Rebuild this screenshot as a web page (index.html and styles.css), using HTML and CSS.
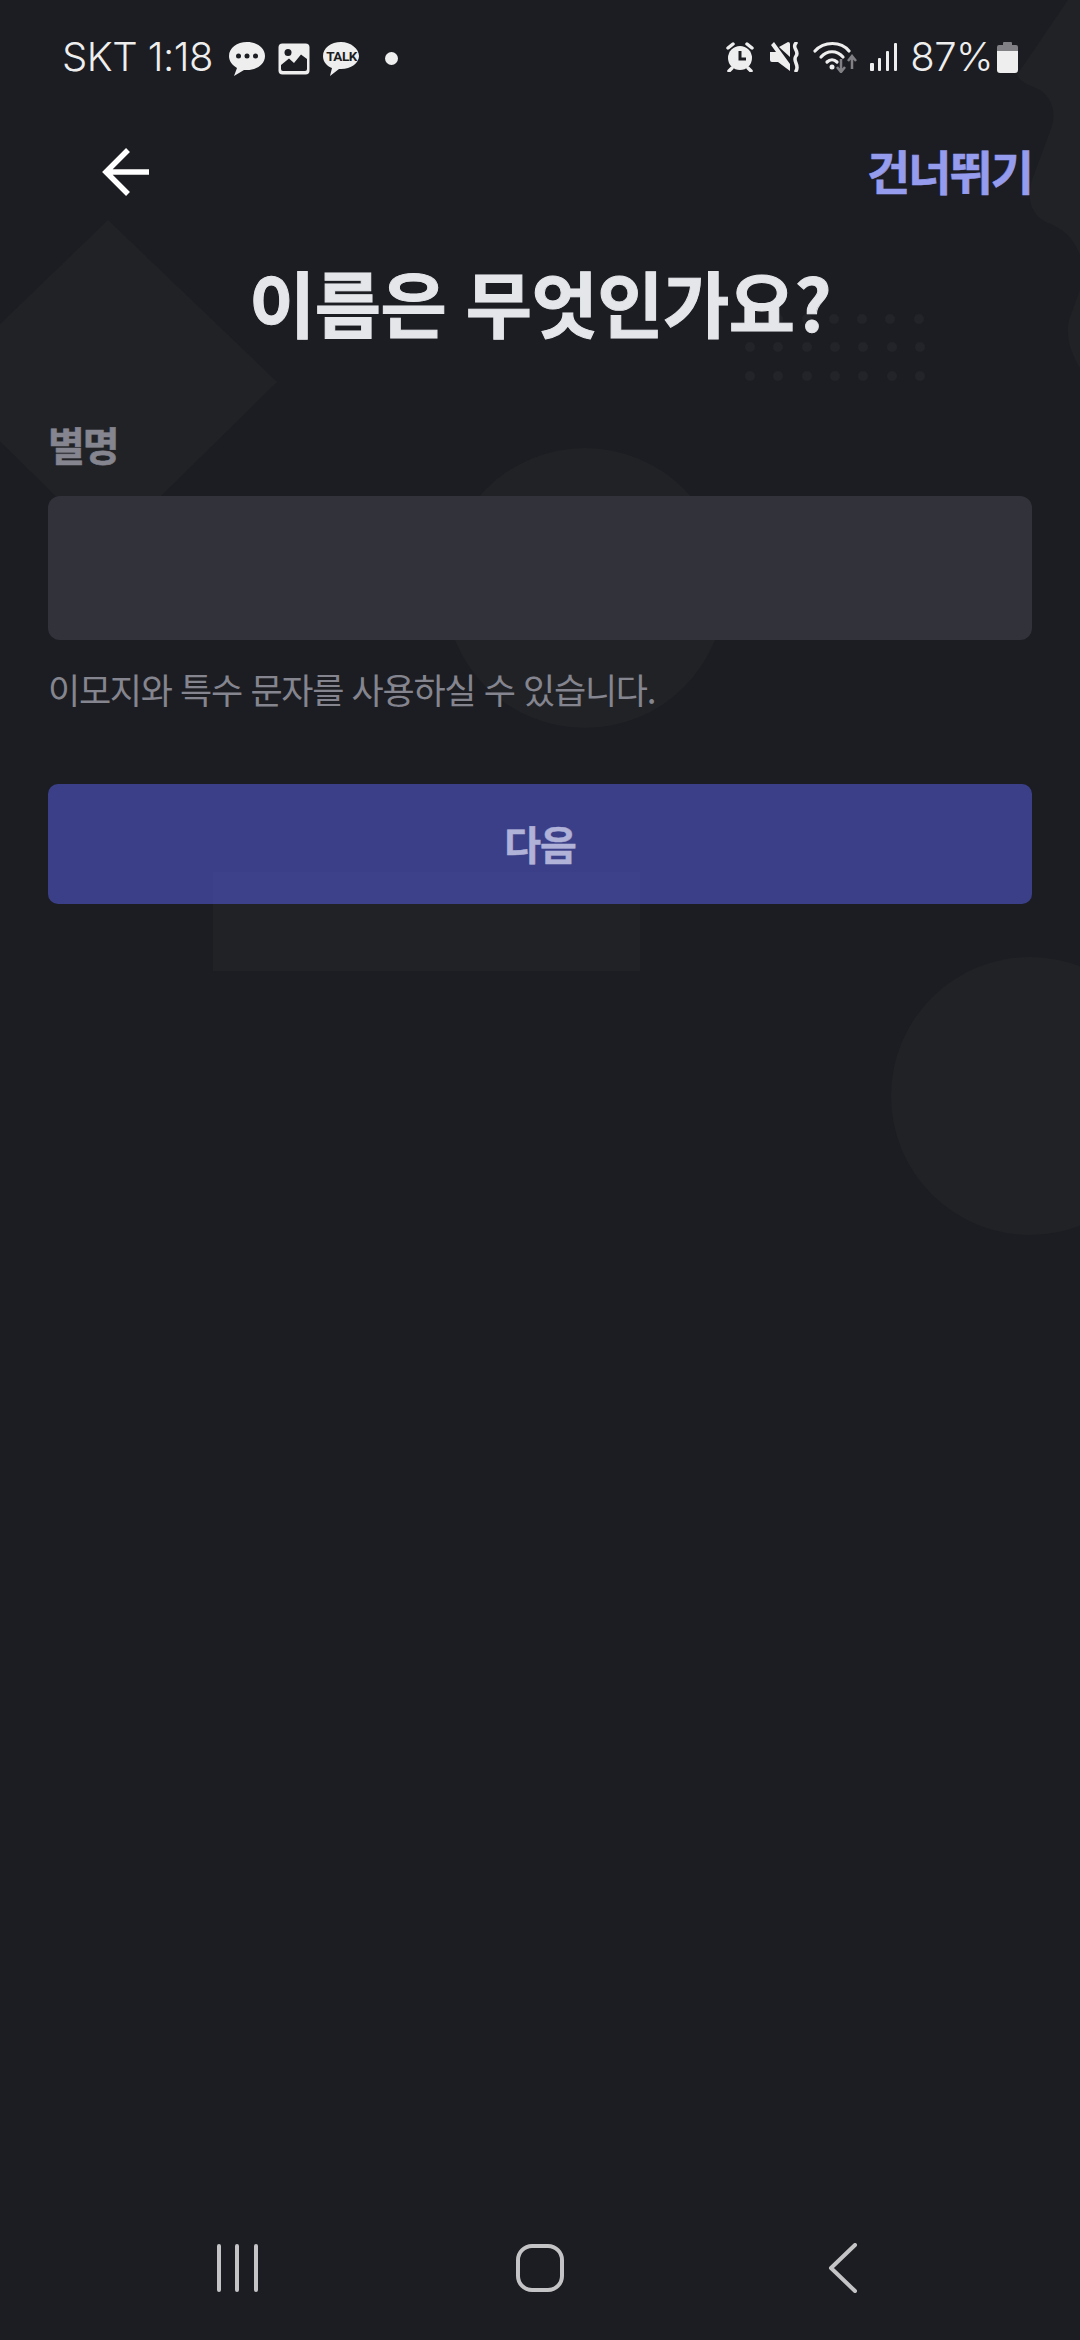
FILE: index.html
```html
<!DOCTYPE html>
<html lang="ko">
<head>
<meta charset="utf-8">
<title>이름은 무엇인가요?</title>
<link rel="stylesheet" href="styles.css">
</head>
<body>
<div class="screen">
  <svg class="decor" width="1080" height="2340" viewBox="0 0 1080 2340">
    <path d="M108 220 L277 382 L108 548 L-60 382 Z"/>
    <circle cx="585" cy="588" r="140"/>
    <rect x="213" y="872" width="427" height="99"/>
    <circle cx="1030" cy="1096" r="139"/>
    <path d="M1068 0 L1017 75 C1022 84 1032 86 1040 90 C1052 98 1056 112 1052 126 L1032 180 C1026 200 1032 216 1048 223 C1062 228 1074 238 1080 255 L1090 255 L1090 0 Z"/>
    <path d="M1080 290 L1069 320 C1065 338 1072 355 1080 368 Z"/>
    <g class="dots">
      <circle cx="750" cy="319" r="5"/><circle cx="778" cy="319" r="5"/><circle cx="807" cy="319" r="5"/><circle cx="834" cy="319" r="5"/><circle cx="862" cy="319" r="5"/><circle cx="890" cy="319" r="5"/><circle cx="919" cy="319" r="5"/>
      <circle cx="750" cy="347" r="5"/><circle cx="778" cy="347" r="5"/><circle cx="807" cy="347" r="5"/><circle cx="835" cy="347" r="5"/><circle cx="863" cy="347" r="5"/><circle cx="892" cy="347" r="5"/><circle cx="920" cy="347" r="5"/>
      <circle cx="750" cy="376" r="5"/><circle cx="778" cy="376" r="5"/><circle cx="807" cy="376" r="5"/><circle cx="835" cy="376" r="5"/><circle cx="863" cy="376" r="5"/><circle cx="892" cy="376" r="5"/><circle cx="920" cy="376" r="5"/>
    </g>
  </svg>

  <div class="status">
    <div class="status-left">
      <span class="status-text">SKT 1:18</span>
      <svg class="ic-chat" width="38" height="36" viewBox="0 0 38 36">
        <path class="fill" d="M19 1C9 1 1 7 1 15c0 5 3 9 8 12l-3 8 10-6h3c10 0 18-6 18-14S29 1 19 1Z"/>
        <circle class="cut" cx="10.500" cy="15" r="2.500"/><circle class="cut" cx="19" cy="15" r="2.500"/><circle class="cut" cx="27.500" cy="15" r="2.500"/>
      </svg>
      <svg class="ic-image" width="32" height="32" viewBox="0 0 32 32">
        <rect class="fill" x="0.500" y="0.500" width="31" height="31" rx="4"/>
        <circle class="cut" cx="10" cy="9.500" r="3.500"/>
        <path class="cut" d="M3 26 L3 22 L11 15.500 L16 20 L23 11.500 L29 16 L29 26 Q29 28 27 28 L5 28 Q3 28 3 26 Z"/>
      </svg>
      <svg class="ic-talk" width="38" height="36" viewBox="0 0 38 36">
        <path class="fill" d="M19 1C9 1 1 7 1 15c0 6 4 10 9 12l-2 8 9-7h2c10 0 18-6 18-13S29 1 19 1Z"/>
        <text class="talk-text" x="19.500" y="20">TALK</text>
      </svg>
      <span class="status-dot"></span>
    </div>
    <div class="status-right">
      <svg class="ic-alarm" width="30" height="30" viewBox="0 0 30 30">
        <circle class="fill" cx="15" cy="16" r="12"/>
        <path class="fill-line" d="M3 6 L8 2 M27 6 L22 2 M7 26 L4 29 M23 26 L26 29"/>
        <path class="cut-line" d="M15 9 V17 H21"/>
      </svg>
      <svg class="ic-mute" width="30" height="30" viewBox="0 0 30 30">
        <path class="fill" d="M0 10 H6 L1 3 L4 0 L20 22 V29 L8 20 H2 Q0 20 0 18 Z"/>
        <path class="fill" d="M9 5 L18 0 Q20 0 20 2 V15 Z"/>
        <path class="wave" d="M26 1 C21 6 30 9 26 14 C22 19 30 23 26 29"/>
      </svg>
      <svg class="ic-wifi" width="44" height="32" viewBox="0 0 44 32">
        <path class="wifi-line" d="M2 10 C11 0 28 0 36 10"/>
        <path class="wifi-line" d="M8 16 C14 9 24 9 30 16"/>
        <path class="wifi-line" d="M14 21 C17 18 21 18 24 21"/>
        <circle class="fill" cx="19" cy="26" r="2.500"/>
        <path class="arrow-line" d="M28 18 V31 M24 26 L28 31 L32 26"/>
        <path class="arrow-line" d="M39 28 V15 M35 20 L39 15 L43 20"/>
      </svg>
      <svg class="ic-signal" width="27" height="28" viewBox="0 0 27 28">
        <rect class="fill" x="0" y="20" width="4" height="8" rx="1"/>
        <rect class="fill" x="8" y="15" width="3" height="13" rx="1"/>
        <rect class="fill" x="16" y="8" width="3" height="20" rx="1"/>
        <rect class="fill" x="24" y="0" width="3" height="28" rx="1"/>
      </svg>
      <span class="status-text status-batt">87%</span>
      <svg class="ic-batt" width="21" height="31" viewBox="0 0 21 31">
        <path class="batt-top" d="M7 0 H14 Q15 0 15 1 V3 H19 Q21 3 21 5 V9 H0 V5 Q0 3 2 3 H6 V1 Q6 0 7 0 Z"/>
        <path class="fill" d="M0 9 H21 V28 Q21 31 18 31 H3 Q0 31 0 28 Z"/>
      </svg>
    </div>
  </div>

  <header class="topbar">
    <svg class="ic-back" width="52" height="52" viewBox="0 0 52 52">
      <path d="M48 26 H5 M27 4 L5 26 L27 48"/>
    </svg>
    <span class="skip">건너뛰기</span>
  </header>

  <h1 class="title">이름은 무엇인가요?</h1>

  <main class="form">
    <label class="label">별명</label>
    <div class="input"></div>
    <p class="help">이모지와 특수 문자를 사용하실 수 있습니다.</p>
    <button class="next">다음</button>
  </main>

  <nav class="navbar">
    <svg class="nav-recent" width="44" height="48" viewBox="0 0 44 48">
      <path d="M3 2 V46 M21 2 V46 M40 2 V46"/>
    </svg>
    <svg class="nav-home" width="48" height="48" viewBox="0 0 48 48">
      <rect x="2" y="2" width="44" height="44" rx="14"/>
    </svg>
    <svg class="nav-back" width="30" height="50" viewBox="0 0 30 50">
      <path d="M27 2 L3 25 L27 48"/>
    </svg>
  </nav>
</div>
</body>
</html>
```

FILE: styles.css
```css
* { box-sizing: border-box; }
html, body { margin: 0; padding: 0; background: #1c1d22; }
.screen {
  position: relative;
  width: 1080px;
  height: 2340px;
  overflow: hidden;
  display: flex;
  flex-direction: column;
  background: #1c1d22;
  font-family: "Noto Sans CJK KR", "Noto Sans", sans-serif;
}
.decor { position: absolute; left: 0; top: 0; fill: #212226; }
.dots { fill: #232429; }

.status {
  position: relative;
  height: 115px;
  padding: 37px 62px 0 62px;
  display: flex;
  justify-content: space-between;
  align-items: flex-start;
  color: #eeeeee;
}
.status-left, .status-right { display: flex; align-items: center; height: 40px; }
.status-text {
  font-family: Inter, Roboto, sans-serif;
  font-weight: 300;
  font-size: 40px;
  line-height: 40px;
  letter-spacing: -0.5px;
}
.fill { fill: #eeeeee; }
.cut { fill: #1c1d22; }
.fill-line { fill: none; stroke: #eeeeee; stroke-width: 3.500; stroke-linecap: round; }
.cut-line { fill: none; stroke: #1c1d22; stroke-width: 3; }
.wave { fill: none; stroke: #eeeeee; stroke-width: 3.500; stroke-linecap: round; }
.wifi-line { fill: none; stroke: #eeeeee; stroke-width: 3.200; stroke-linecap: round; }
.arrow-line { fill: none; stroke: #808085; stroke-width: 2.500; }
.batt-top { fill: #808085; }
.talk-text {
  font-family: Roboto, sans-serif;
  font-weight: 700;
  font-size: 13.500px;
  letter-spacing: -0.5px;
  text-anchor: middle;
  fill: #1c1d22;
}
.ic-chat { margin-left: 15px; margin-top: 4px; }
.ic-image { margin-left: 12px; margin-top: 4px; }
.ic-talk { margin-left: 12px; margin-top: 4px; }
.status-dot {
  width: 13px;
  height: 13px;
  margin-left: 25px;
  margin-top: 2px;
  border-radius: 50%;
  background: #eeeeee;
}
.ic-mute { margin-left: 15px; }
.ic-wifi { margin-left: 13px; }
.ic-signal { margin-left: 13px; }
.status-batt { margin-left: 13px; }
.ic-batt { margin-left: 4px; }

.topbar {
  position: relative;
  height: 118px;
  padding: 31px 48px 0 101px;
  display: flex;
  justify-content: space-between;
  align-items: flex-start;
}
.ic-back { fill: none; stroke: #ffffff; stroke-width: 5.500; }
.skip {
  margin-top: -2px;
  font-size: 47px;
  font-weight: 700;
  line-height: 52px;
  letter-spacing: -2px;
  color: #959bed;
  -webkit-text-stroke: 0.6px #959bed;
}
.title {
  position: relative;
  margin: 18px 0 0;
  text-align: center;
  font-size: 72px;
  font-weight: 700;
  line-height: 100px;
  letter-spacing: -0.5px;
  color: #e4e6ea;
  -webkit-text-stroke: 1px #e4e6ea;
}
.form {
  position: relative;
  padding: 0 48px;
  display: flex;
  flex-direction: column;
}
.label {
  margin-top: 68px;
  height: 50px;
  font-size: 40px;
  font-weight: 700;
  line-height: 50px;
  letter-spacing: -2px;
  color: #84858f;
  -webkit-text-stroke: 0.6px #84858f;
}
.input {
  margin-top: 27px;
  height: 144px;
  border-radius: 12px;
  background: #32323b;
}
.help {
  margin: 24px 0 0;
  font-size: 35px;
  line-height: 50px;
  letter-spacing: -1.3px;
  color: #84858f;
}
.next {
  margin-top: 70px;
  height: 120px;
  border: 0;
  border-radius: 10px;
  padding: 0 0 3px;
  background: rgba(72, 79, 180, 0.7);
  color: #b0b2d8;
  font-family: inherit;
  font-size: 40px;
  font-weight: 700;
  letter-spacing: -1px;
  -webkit-text-stroke: 0.5px #b0b2d8;
}
.navbar {
  position: relative;
  margin-top: auto;
  height: 49px;
  margin-bottom: 48px;
  padding: 0 222px 0 216px;
  display: flex;
  justify-content: space-between;
  align-items: center;
}
.navbar svg { fill: none; stroke: #c4c4c6; stroke-width: 4; stroke-linecap: round; stroke-linejoin: round; }
.nav-home { margin-right: 8px; }
```
